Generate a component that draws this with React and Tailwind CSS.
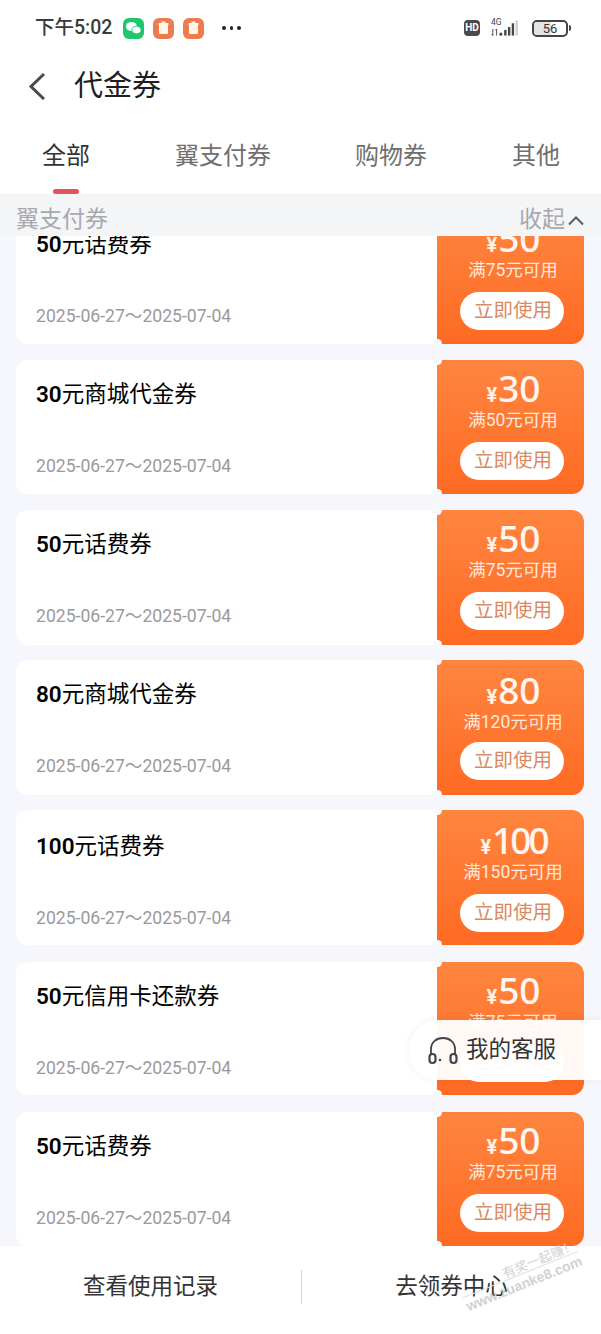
const CJK = '"Roboto","Noto Sans CJK SC",sans-serif';

const coupons = [
  { num: "50", title: "元话费券", amount: "50", limit: "满75元可用", h: 134, mt: -26 },
  { num: "30", title: "元商城代金券", amount: "30", limit: "满50元可用", h: 134, mt: 16 },
  { num: "50", title: "元话费券", amount: "50", limit: "满75元可用", h: 135, mt: 16 },
  { num: "80", title: "元商城代金券", amount: "80", limit: "满120元可用", h: 135, mt: 15, amountShift: 2, btnShift: -2 },
  { num: "100", title: "元话费券", amount: "100", limit: "满150元可用", h: 135, mt: 15, amountShift: 2, titleShift: 2 },
  { num: "50", title: "元信用卡还款券", amount: "50", limit: "满75元可用", h: 133, mt: 17 },
  { num: "50", title: "元话费券", amount: "50", limit: "满75元可用", h: 134, mt: 17 },
];

function Coupon({ c }) {
  return (
    <div className="flex mx-4 shrink-0" style={{ height: c.h, marginTop: c.mt }}>
      <div className="w-[421px] bg-white rounded-l-xl rounded-r-md pl-5 flex flex-col" style={{ paddingTop: 19 + (c.titleShift || 0) }}>
        <div className="text-[22.5px] leading-[30px] text-black">
          <span className="font-semibold">{c.num}</span>
          <span>{c.title}</span>
        </div>
        <div className="mt-[45px] text-[17.6px] leading-6 text-[#9a9a9a]">2025-06-27～2025-07-04</div>
      </div>
      <div className="relative w-[147px] rounded-r-xl bg-gradient-to-b from-[#fe853f] to-[#fe6a22] flex flex-col items-center text-white">
        <span className="absolute -left-[4px] -top-[4px] w-[9px] h-[9px] rounded-full bg-[#f7f8fc]" />
        <span className="absolute -left-[4px] -bottom-[4px] w-[9px] h-[9px] rounded-full bg-[#f7f8fc]" />
        <div className="flex items-baseline h-[44px] pl-[6px]" style={{ marginTop: 6 + (c.amountShift || 0) }}>
          <span className="text-[20px] font-bold mr-[1px] text-[#fff1e6]">¥</span>
          <span className={`text-[37px] leading-[44px] font-medium text-[#fff6ef] ${c.amount.length > 2 ? "tracking-[-3px]" : ""}`} style={{ fontFamily: '"Noto Sans",sans-serif' }}>{c.amount}</span>
        </div>
        <div className="text-[17.5px] leading-[22px] text-[#ffe9dc] -mt-[1px] ml-[5px]">{c.limit}</div>
        <div className="w-[104px] h-[38px] ml-[3px] pl-[2px] rounded-full bg-white flex items-center justify-center text-[19.5px] text-[#d98a64]" style={{ marginTop: 11 + (c.btnShift || 0) }}>立即使用</div>
      </div>
    </div>
  );
}

function Tab({ children, active, className }) {
  return (
    <div className={`text-[24px] leading-[34px] ${active ? "text-[#333]" : "text-[#6f6f6f]"} ${className}`}>{children}</div>
  );
}

function AppIcon({ color, children }) {
  return (
    <div className="w-[21px] h-[21px] rounded-[6px] flex items-center justify-center" style={{ background: color }}>
      {children}
    </div>
  );
}

function Bag() {
  return (
    <svg width="13" height="14" viewBox="0 0 13 14">
      <rect x="2" y="3" width="9" height="10" rx="1" fill="#fff6e8" />
      <rect x="1.500" y="2" width="10" height="2" rx="0.6" fill="#fff6e8" />
      <rect x="4.500" y="0.500" width="4" height="2" rx="0.6" fill="#fff6e8" />
    </svg>
  );
}

export default function App() {
  return (
    <div className="w-[601px] h-[1334px] overflow-hidden relative bg-[#f6f7fc] flex flex-col" style={{ fontFamily: CJK }}>
      <div className="bg-white h-[194px] shrink-0 flex flex-col">
        <div className="h-[56px] flex items-center pl-[35px] pr-[30px]">
          <span className="text-[19.5px] font-medium text-[#3a3a3a] mr-[10px] w-[78px] whitespace-nowrap">下午5:02</span>
          <div className="flex gap-[9px] items-center">
            <AppIcon color="#1fc66e">
              <svg width="17" height="14" viewBox="0 0 17 14">
                <ellipse cx="6.500" cy="5.500" rx="5.500" ry="4.500" fill="#fff" />
                <ellipse cx="11.500" cy="9" rx="4.600" ry="3.800" fill="#fff" stroke="#1fc66e" strokeWidth="0.900" />
              </svg>
            </AppIcon>
            <AppIcon color="#ee7a50"><Bag /></AppIcon>
            <AppIcon color="#ee7a50"><Bag /></AppIcon>
          </div>
          <div className="ml-[18px] flex gap-[4px]">
            <span className="w-[3.500px] h-[3.500px] rounded-full bg-[#222]" />
            <span className="w-[3.500px] h-[3.500px] rounded-full bg-[#222]" />
            <span className="w-[3.500px] h-[3.500px] rounded-full bg-[#222]" />
          </div>
          <div className="ml-auto flex items-center">
            <div className="w-4 h-4 rounded-[4px] bg-[#4a4a4a] text-white text-[10px] font-bold leading-4 text-center">HD</div>
            <svg width="34" height="22" viewBox="0 0 36 22" className="ml-[10px]">
              <text x="1" y="8" fontSize="9" fill="#444" fontFamily="Roboto">4G</text>
              <path d="M3 12v7M1.500 17.500L3 19M7 12v7M5.500 13.500L7 12" stroke="#444" strokeWidth="1" fill="none" />
              <rect x="10" y="16" width="3" height="3" fill="#444" />
              <rect x="15" y="13" width="2.500" height="6" fill="#444" />
              <rect x="19" y="10" width="2.500" height="9" fill="#444" />
              <rect x="23" y="6" width="2.500" height="13" fill="#444" />
              <rect x="27" y="3" width="2.500" height="16" fill="#cfcfcf" />
            </svg>
            <div className="relative ml-[8px] w-[36px] h-[17px] rounded-[5px] border-2 border-[#444] overflow-hidden flex items-center justify-center">
              <span className="absolute left-0 top-0 bottom-0 w-[17px] bg-[#e4e4e4]" />
              <span className="relative text-[13px] leading-none text-[#333]">56</span>
            </div>
            <span className="w-[2px] h-[6px] ml-[1px] bg-[#444] rounded-r" />
          </div>
        </div>
        <div className="h-[60px] flex items-center pl-[28px]">
          <svg width="18" height="28" viewBox="0 0 18 28" fill="none">
            <path d="M16 2L3 14.500L16 27" stroke="#4a4a4a" strokeWidth="3" />
          </svg>
          <span className="ml-[28px] text-[29px] leading-9 text-[#1f1f1f]">代金券</span>
        </div>
        <div className="relative flex mt-[23px] pl-[42px] h-[44px]">
          <Tab active className="w-[133px]">全部</Tab>
          <Tab className="w-[180px]">翼支付券</Tab>
          <Tab className="w-[157px]">购物券</Tab>
          <Tab>其他</Tab>
          <span className="absolute left-[53px] top-[50px] w-[26px] h-[5px] rounded-full bg-[#e2535f]" />
        </div>
      </div>

      <div className="h-[42px] shrink-0 bg-[#f4f5f7] flex items-center pl-4 pr-4 pt-[10px] relative z-10">
        <span className="text-[23px] leading-8 text-[#a8a9ad]">翼支付券</span>
        <span className="ml-auto mr-[2px] text-[23px] leading-8 text-[#a8a9ad]">收起</span>
        <svg width="18" height="11" viewBox="0 0 18 11" fill="none" className="mt-[1px]">
          <path d="M2 9.500L9 2.500L16 9.500" stroke="#5c5c5c" strokeWidth="2" />
        </svg>
      </div>

      <div className="h-[1010px] shrink-0 overflow-hidden flex flex-col">
        {coupons.map((c, i) => (
          <Coupon key={i} c={c} />
        ))}
      </div>

      <div className="flex-1 bg-white flex items-center pb-[7px]">
        <div className="w-[301px] text-center text-[22.500px] text-[#333]">查看使用记录</div>
        <span className="w-[1px] h-[34px] bg-[#d8d8d8]" />
        <div className="flex-1 text-center text-[22.500px] text-[#333]">去领券中心</div>
      </div>

      <div className="absolute left-[409px] top-[1020px] w-[192px] h-[60px] bg-white/95 rounded-l-[30px] shadow-[0_0_8px_rgba(0,0,0,0.06)] flex items-center pl-[19px]">
        <svg width="30" height="30" viewBox="0 0 30 30" fill="none">
          <path d="M3 19V14C3 7.500 8 3 15 3s12 4.500 12 11v5" stroke="#3f4650" strokeWidth="1.800" />
          <rect x="1.500" y="19" width="6" height="9" rx="3" stroke="#3f4650" strokeWidth="2.200" />
          <rect x="22.500" y="19" width="6" height="9" rx="3" stroke="#3f4650" strokeWidth="2.200" />
          <circle cx="12" cy="25" r="1.300" fill="#3f4650" />
        </svg>
        <span className="ml-[8px] text-[22.500px] leading-8 -mt-[2px] text-[#333]">我的客服</span>
      </div>

      <div className="absolute left-[459px] top-[1261px] -rotate-[22deg] text-[#d2d2d2] leading-none pointer-events-none">
        <div className="pl-[46px] text-[13px] border-b border-[#dedede] whitespace-nowrap">有奖一起赚！</div>
        <div className="text-[14px] mt-[2px] font-bold whitespace-nowrap" style={{ fontFamily: '"Liberation Sans",sans-serif' }}>www.zuanke8.com</div>
      </div>
    </div>
  );
}
